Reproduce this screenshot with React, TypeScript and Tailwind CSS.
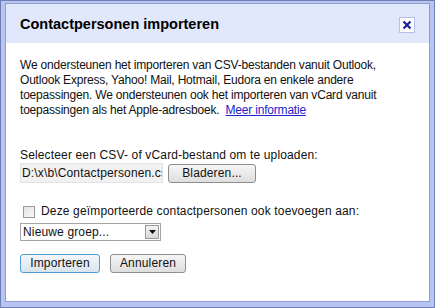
import React from 'react';

const App: React.FC = () => {
  return (
    <div className="w-[435px] h-[308px] bg-[#6f7fb6] p-px font-['Liberation_Sans',Arial,sans-serif] text-[12px] text-[#111]">
      <div className="h-full bg-[#b8c5f0] pt-[2px] px-[4px] pb-[5px]">
        <div className="h-full flex flex-col border border-[#8d9dd3] bg-white">
          {/* title bar */}
          <div className="h-[39px] shrink-0 bg-[#e1e8fb] flex items-center justify-between pl-[14px] pr-[14px] pt-[2px]">
            <h1 className="text-[14.5px] font-bold text-black">Contactpersonen importeren</h1>
            <button className="w-[16px] h-[16px] bg-white border border-[#b4c1ea] flex items-center justify-center">
              <svg width="10" height="10" viewBox="0 0 10 10">
                <path d="M1.5 1.5 L8.5 8.5 M8.5 1.5 L1.5 8.5" stroke="#1c1f9c" strokeWidth="2.2" />
              </svg>
            </button>
          </div>

          <div className="flex-1 pl-[14px] pr-[10px] pt-[15px] leading-[15px] whitespace-nowrap">
            <p className="tracking-[-0.2px]">
              We ondersteunen het importeren van CSV-bestanden vanuit Outlook,<br />
              Outlook Express, Yahoo! Mail, Hotmail, Eudora en enkele andere<br />
              toepassingen. We ondersteunen ook het importeren van vCard vanuit<br />
              toepassingen als het Apple-adresboek.{' '}
              <a href="#" className="ml-[3px] text-[#2222cc] underline">Meer informatie</a>
            </p>

            <div className="tracking-[0.15px]">
              <p className="mt-[30px]">Selecteer een CSV- of vCard-bestand om te uploaden:</p>
              <div className="flex items-center gap-[5px]">
                <div className="w-[143px] h-[20px] bg-[#f1f1f1] border border-[#e3e3e3] pl-px flex items-center overflow-hidden">
                  D:\x\b\Contactpersonen.csv
                </div>
                <button className="w-[88px] h-[19px] rounded-[3px] border border-[#8e8e8e] bg-gradient-to-b from-[#f6f6f6] to-[#dedede] flex items-center justify-center">
                  Bladeren...
                </button>
              </div>

              <div className="mt-[21px] flex items-center gap-[6px] pl-[3px]">
                <span className="w-[12px] h-[12px] border border-[#9a9a9a] bg-gradient-to-br from-[#e4e4e4] to-[#f8f8f8]" />
                <span>Deze geïmporteerde contactpersonen ook toevoegen aan:</span>
              </div>
              <div className="mt-[4px] w-[141px] h-[18px] border border-[#a5a5a5] bg-white flex items-center justify-between pl-[2px] pr-px">
                <span>Nieuwe groep...</span>
                <span className="w-[14px] h-[14px] border border-[#9a9a9a] bg-gradient-to-b from-[#f4f4f4] to-[#d8d8d8] flex items-center justify-center">
                  <svg width="7" height="4" viewBox="0 0 7 4"><path d="M0 0 H7 L3.5 4 Z" fill="#111" /></svg>
                </span>
              </div>

              <div className="mt-[13px] flex items-center gap-[10px]">
                <button className="w-[80px] h-[19px] rounded-[3px] border border-[#4e9dd3] bg-gradient-to-b from-[#f3f7fb] to-[#d9e4ee] flex items-center justify-center">
                  Importeren
                </button>
                <button className="w-[76px] h-[19px] rounded-[3px] border border-[#8e8e8e] bg-gradient-to-b from-[#f6f6f6] to-[#dedede] flex items-center justify-center">
                  Annuleren
                </button>
              </div>
            </div>
          </div>
        </div>
      </div>
    </div>
  );
};

export default App;
